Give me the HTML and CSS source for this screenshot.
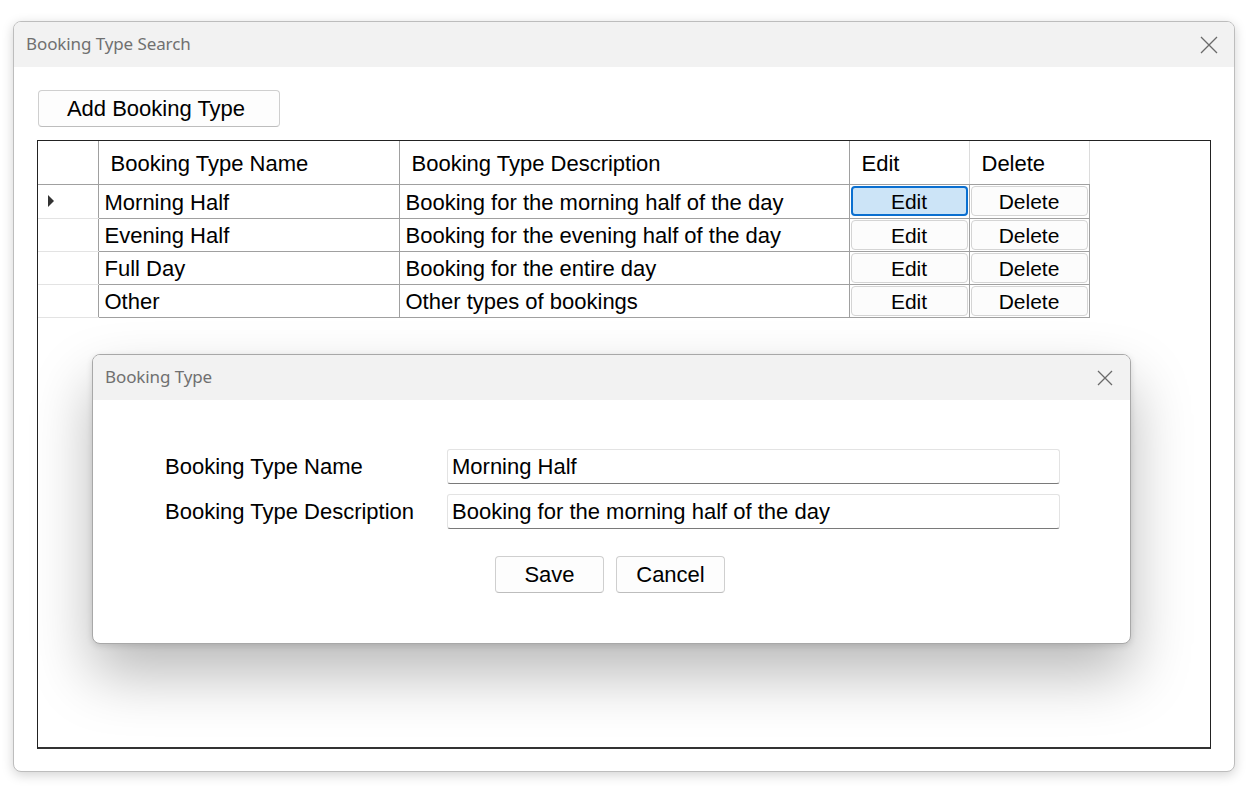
FILE: index.html
```html
<!DOCTYPE html>
<html>
<head>
<meta charset="utf-8">
<link rel="stylesheet" href="styles.css">
</head>
<body>
<div class="window">
  <div class="titlebar">
    <span class="title">Booking Type Search</span>
    <svg class="close" width="18" height="18" viewBox="0 0 18 18"><path d="M1 1 L17 17 M17 1 L1 17" stroke="#6a6a6a" stroke-width="1.3" fill="none"/></svg>
  </div>
  <div class="content">
    <button class="btn add-btn">Add Booking Type</button>
    <div class="grid-panel">
      <table class="grid">
        <thead>
          <tr>
            <th class="rh"></th>
            <th class="c-name">Booking Type Name</th>
            <th class="c-desc">Booking Type Description</th>
            <th class="c-edit">Edit</th>
            <th class="c-del">Delete</th>
          </tr>
        </thead>
        <tbody>
          <tr class="first">
            <td class="rh"><span class="arrow"></span></td>
            <td>Morning Half</td>
            <td>Booking for the morning half of the day</td>
            <td class="bcell"><span class="cellbtn selected">Edit</span></td>
            <td class="bcell"><span class="cellbtn">Delete</span></td>
          </tr>
          <tr>
            <td class="rh"></td>
            <td>Evening Half</td>
            <td>Booking for the evening half of the day</td>
            <td class="bcell"><span class="cellbtn">Edit</span></td>
            <td class="bcell"><span class="cellbtn">Delete</span></td>
          </tr>
          <tr>
            <td class="rh"></td>
            <td>Full Day</td>
            <td>Booking for the entire day</td>
            <td class="bcell"><span class="cellbtn">Edit</span></td>
            <td class="bcell"><span class="cellbtn">Delete</span></td>
          </tr>
          <tr>
            <td class="rh"></td>
            <td>Other</td>
            <td>Other types of bookings</td>
            <td class="bcell"><span class="cellbtn">Edit</span></td>
            <td class="bcell"><span class="cellbtn">Delete</span></td>
          </tr>
        </tbody>
      </table>
    </div>
  </div>
</div>

<div class="dialog">
  <div class="titlebar dlg-title">
    <span class="title">Booking Type</span>
    <svg class="close" width="18" height="18" viewBox="0 0 18 18"><path d="M2 2 L16 16 M16 2 L2 16" stroke="#6a6a6a" stroke-width="1.3" fill="none"/></svg>
  </div>
  <div class="dlg-body">
    <div class="form-row">
      <label class="lbl">Booking Type Name</label>
      <div class="textbox">Morning Half</div>
    </div>
    <div class="form-row">
      <label class="lbl">Booking Type Description</label>
      <div class="textbox">Booking for the morning half of the day</div>
    </div>
    <div class="actions">
      <button class="btn small-btn">Save</button>
      <button class="btn small-btn">Cancel</button>
    </div>
  </div>
</div>
</body>
</html>
```

FILE: styles.css
```css
html, body {
  margin: 0;
  padding: 0;
  background: #ffffff;
}
body {
  width: 1248px;
  height: 787px;
  overflow: hidden;
  position: relative;
  padding-top: 21px;
  box-sizing: border-box;
  font-family: "Liberation Sans", Arial, sans-serif;
}
.window {
  margin-left: 13px;
  width: 1222px;
  height: 751px;
  box-sizing: border-box;
  border: 1px solid #bdbdbd;
  border-radius: 8px;
  background: #fff;
  box-shadow: 0 3px 12px rgba(0,0,0,0.18);
  overflow: hidden;
  display: flex;
  flex-direction: column;
}
.titlebar {
  height: 45px;
  flex: none;
  background: #f2f2f2;
  display: flex;
  align-items: center;
  justify-content: space-between;
  padding: 0 16px 0 12px;
}
.title {
  font-family: "Noto Sans", "Open Sans", sans-serif;
  font-size: 17px;
  color: #707070;
  letter-spacing: -0.1px;
  position: relative;
  top: -1px;
}
.close {
  display: block;
}
.content {
  padding: 23px 24px 0 23px;
}
.btn {
  font-family: "Liberation Sans", Arial, sans-serif;
  font-size: 22px;
  color: #000;
  background: #fdfdfd;
  border: 1px solid #cfcfcf;
  border-bottom-color: #bdbdbd;
  border-radius: 4px;
  padding: 0;
  cursor: default;
}
.add-btn {
  display: block;
  margin-left: 1px;
  width: 242px;
  height: 37px;
  padding-right: 6px;
}
.grid-panel {
  margin-top: 13px;
  width: 1174px;
  height: 609px;
  box-sizing: border-box;
  border: 1px solid #222;
  border-bottom: 2px solid #333;
  background: #fff;
}
.grid {
  border-collapse: collapse;
  table-layout: fixed;
  font-size: 22px;
  color: #000;
}
.grid th {
  height: 43px;
  padding: 3px 0 0 12px;
  font-weight: normal;
  text-align: left;
  border-right: 1px solid #a0a0a0;
  border-bottom: 1px solid #a0a0a0;
  box-sizing: border-box;
}
.grid th.c-edit, .grid th.c-del {
  border-right-color: #dcdcdc;
}
.grid th.rh {
  padding: 0;
}
.grid td {
  height: 33px;
  padding: 3px 0 0 6px;
  border-right: 1px solid #a0a0a0;
  border-bottom: 1px solid #a0a0a0;
  white-space: nowrap;
  box-sizing: border-box;
}
.grid tr.first td {
  height: 34px;
}
.grid .rh {
  width: 60px;
}
.grid td.rh {
  padding: 0;
  border-bottom-color: #e3e3e3;
}
.c-name { width: 301px; }
.c-desc { width: 450px; }
.c-edit { width: 120px; }
.c-del { width: 120px; }
.arrow {
  display: block;
  width: 0;
  height: 0;
  margin-left: 10px;
  border-top: 6px solid transparent;
  border-bottom: 6px solid transparent;
  border-left: 6px solid #333;
}
.grid td.bcell {
  padding: 1px;
}
.cellbtn {
  display: flex;
  align-items: center;
  justify-content: center;
  height: 30px;
  padding-top: 2px;
  box-sizing: border-box;
  border: 1px solid #d4d4d4;
  border-radius: 4px;
  background: #fcfcfc;
  font-size: 21px;
}
.cellbtn.selected {
  background: #cce4f7;
  border: 2px solid #0a6fd0;
}
.dialog {
  position: absolute;
  left: 92px;
  top: 354px;
  width: 1039px;
  height: 290px;
  box-sizing: border-box;
  border: 1px solid #a8a8a8;
  border-radius: 8px;
  background: #fff;
  overflow: hidden;
  box-shadow: 0 30px 60px rgba(0,0,0,0.28), 0 2px 6px rgba(0,0,0,0.12);
}
.dlg-title {
  height: 45px;
  padding-left: 12px;
  padding-right: 16px;
}
.dlg-body {
  padding: 49px 0 0 72px;
}
.form-row {
  display: flex;
  align-items: center;
  margin-bottom: 10px;
}
.lbl {
  width: 282px;
  font-size: 22px;
  color: #000;
}
.textbox {
  width: 613px;
  height: 35px;
  box-sizing: border-box;
  border: 1px solid #e3e3e3;
  border-bottom: 1px solid #7a7a7a;
  border-radius: 3px;
  padding: 0 0 0 4px;
  display: flex;
  align-items: center;
  font-size: 22px;
  color: #000;
  white-space: nowrap;
}
.actions {
  display: flex;
  gap: 12px;
  margin-top: 27px;
  padding-left: 330px;
}
.small-btn {
  width: 109px;
  height: 37px;
}
```
